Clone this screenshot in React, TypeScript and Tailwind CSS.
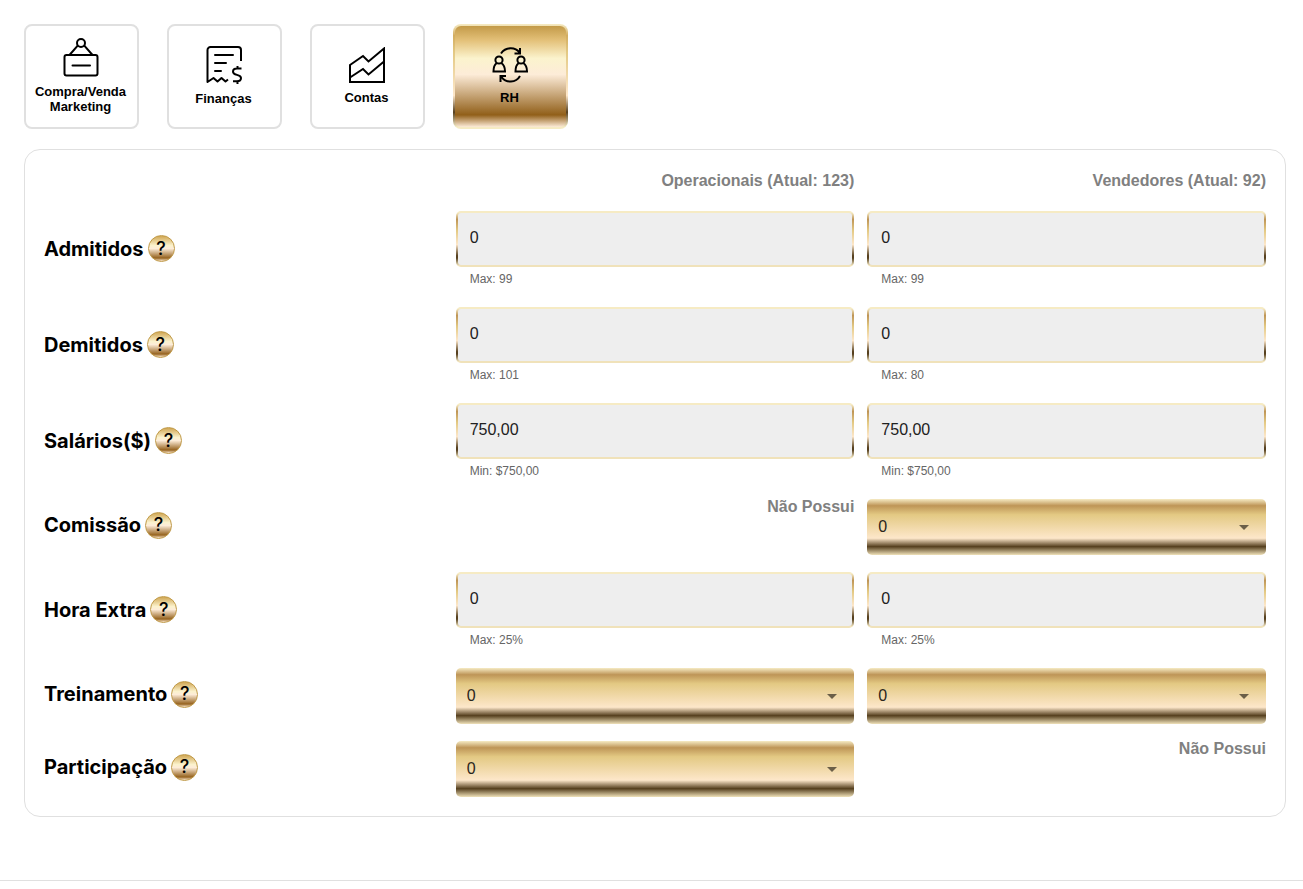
import { useState, type ReactNode } from "react";
import clsx from "clsx";

type Field =
  | { kind: "input"; value: string; hint: string }
  | { kind: "select" }
  | { kind: "none" };

const ROWS: { label: string; fields: [Field, Field] }[] = [
  {
    label: "Admitidos",
    fields: [
      { kind: "input", value: "0", hint: "Max: 99" },
      { kind: "input", value: "0", hint: "Max: 99" },
    ],
  },
  {
    label: "Demitidos",
    fields: [
      { kind: "input", value: "0", hint: "Max: 101" },
      { kind: "input", value: "0", hint: "Max: 80" },
    ],
  },
  {
    label: "Salários($)",
    fields: [
      { kind: "input", value: "750,00", hint: "Min: $750,00" },
      { kind: "input", value: "750,00", hint: "Min: $750,00" },
    ],
  },
  { label: "Comissão", fields: [{ kind: "none" }, { kind: "select" }] },
  {
    label: "Hora Extra",
    fields: [
      { kind: "input", value: "0", hint: "Max: 25%" },
      { kind: "input", value: "0", hint: "Max: 25%" },
    ],
  },
  { label: "Treinamento", fields: [{ kind: "select" }, { kind: "select" }] },
  { label: "Participação", fields: [{ kind: "select" }, { kind: "none" }] },
];

const COLUMNS = ["Operacionais", "Vendedores"];
const TOTALS = [123, 92];

function Icon({ height, children }: { height: number; children: ReactNode }) {
  return (
    <svg
      width="36"
      height={height}
      viewBox={`0 0 36 ${height}`}
      fill="none"
      stroke="currentColor"
      strokeWidth="2"
      aria-hidden="true"
    >
      {children}
    </svg>
  );
}

const TABS = [
  {
    id: "marketing",
    label: "Compra/Venda Marketing",
    icon: (
      <Icon height={39}>
        <circle cx="18" cy="5" r="4" />
        <path d="M6.5 17 14.7 7.6M29.5 17 21.3 7.6" />
        <rect x="1.5" y="17" width="33" height="20.5" rx="2" />
        <path d="M9.5 27.5h17.5" strokeLinecap="round" />
      </Icon>
    ),
  },
  {
    id: "financas",
    label: "Finanças",
    icon: (
      <Icon height={38}>
        <path
          d="M35 15V4a3 3 0 0 0-3-3H4.500a3 3 0 0 0-3 3v32l6-4 4 3.500 4-3.500 4 3.500 2.500-2"
          strokeLinejoin="round"
        />
        <path d="M9 9h18M9 17h11M9 25h6" strokeLinecap="round" />
        <path d="M35.500 22.500h-4.500c-2.500 0-4 1.300-4 3.200 0 4.300 8 2 8 6.300 0 2-1.500 3.200-4 3.200h-4M31.500 20v2.500M31.500 35V38" />
      </Icon>
    ),
  },
  {
    id: "contas",
    label: "Contas",
    icon: (
      <Icon height={36}>
        <path d="M1 18 14 9l5.5 5.5L35 1.500V35H1ZM1 30.500 14 22l5.500 5.500L35 14.500" />
      </Icon>
    ),
  },
  {
    id: "rh",
    label: "RH",
    icon: (
      <Icon height={36}>
        <circle cx="7" cy="13" r="3.600" />
        <path d="M4.800 16C2.500 17.500 1.500 20 1.500 24.500h11.500c0-4.500-1.300-7-3.800-8.500" />
        <circle cx="29" cy="13" r="3.600" />
        <path d="M26.800 16c-2.300 1.500-3.300 4-3.300 8.500H35c0-4.500-1.300-7-3.800-8.500" />
        <path d="M9 6.500c4.500-6.500 14-7 18.500-1M28 1v5.500h-5.500" />
        <path d="M28 29c-4 7-14 7.500-18.500 1M8.500 35v-6H14" />
      </Icon>
    ),
  },
];

function HelpButton({ topic }: { topic: string }) {
  return (
    <button
      type="button"
      aria-label={`Ajuda: ${topic}`}
      className="flex size-[27px] shrink-0 items-center justify-center rounded-full border border-[#c09a48] bg-[linear-gradient(#d0a652_0%,#fbf2cd_38%,#fdecd8_50%,#96631f_88%,#fbe6cd_100%)] font-['Inter'] text-lg leading-none font-medium"
    >
      ?
    </button>
  );
}

function NumberField({ id, name, initial, hint }: { id: string; name: string; initial: string; hint: string }) {
  const [value, setValue] = useState(initial);

  return (
    <div className="min-w-0">
      <input
        id={id}
        aria-label={name}
        aria-describedby={`${id}-hint`}
        value={value}
        onChange={(e) => setValue(e.target.value)}
        className="block h-14 w-full rounded-[5px] border-2 border-transparent px-3 pb-0.5 text-base text-[#212121] [background:linear-gradient(#eeeeee,#eeeeee)_padding-box,linear-gradient(#f6ebc4_0%,#f6ebc4_3%,#be9557_15%,#e3c983_35%,#fde7ca_60%,#56401f_80%,#56401f_84%,#f0e2ba_97%)_border-box]"
      />
      <p id={`${id}-hint`} className="mt-0.5 mb-px px-3.5 text-xs leading-5 text-[#666666]">
        {hint}
      </p>
    </div>
  );
}

function SelectField({ id, name }: { id: string; name: string }) {
  const [value, setValue] = useState("0");

  return (
    <div className="relative h-14 min-w-0">
      <select
        id={id}
        aria-label={name}
        value={value}
        onChange={(e) => setValue(e.target.value)}
        className="size-full appearance-none rounded-[5px] bg-[linear-gradient(#f6ebc4_0%,#be9557_12%,#e3c983_28%,#fde7ca_70%,#56401f_85%,#f0e2ba_100%)] pr-8 pl-[11px] text-base text-[#2a261c]"
      >
        <option value="0">0</option>
        <option value="1">1</option>
        <option value="2">2</option>
      </select>
      <svg
        viewBox="0 0 24 24"
        className="pointer-events-none absolute top-4 right-2.5 size-6 fill-[#6b5f48]"
        aria-hidden="true"
      >
        <path d="m7 10 5 5 5-5z" />
      </svg>
    </div>
  );
}

export default function App() {
  const [active, setActive] = useState("rh");

  return (
    <div className="bg-white pt-6 font-['Liberation_Sans',Arial,sans-serif] text-black">
      <main className="pr-[17px] pl-6">
        <nav className="mb-5 flex flex-wrap gap-7">
          {TABS.map((tab) => (
            <button
              key={tab.id}
              type="button"
              aria-pressed={active === tab.id}
              onClick={() => setActive(tab.id)}
              className={clsx(
                "flex h-[105px] w-[115px] flex-col items-center justify-center gap-[7px] rounded-lg border-2 pr-0.5 pb-0.5 text-[13px] leading-[15px] font-bold",
                active === tab.id
                  ? "border-transparent [background:linear-gradient(#c39a48_0%,#e3c078_14%,#fbf3cd_32%,#fdecd8_48%,#915f19_88%,#fdebd8_100%)_padding-box,linear-gradient(#f6ebc4_0%,#d3ad60_11%,#e3c983_27%,#fde7ca_68%,#56401f_84%,#f6ebc4_98%)_border-box]"
                  : "border-[#e0e0e0] bg-white",
              )}
            >
              {tab.icon}
              <span>{tab.label}</span>
            </button>
          ))}
        </nav>

        <section className="grid grid-cols-3 gap-x-[13px] gap-y-[17px] rounded-2xl border border-[#e0e0e0] px-[19px] pt-5 pb-[19px]">
          {COLUMNS.map((column, i) => (
            <h2
              key={column}
              className={clsx(
                "h-6 text-right text-base leading-[22px] font-bold text-[#808080]",
                i === 0 && "col-start-2",
              )}
            >
              {column} (Atual: {TOTALS[i]})
            </h2>
          ))}

          {ROWS.map((row, r) => (
            <div key={row.label} className="col-span-3 grid grid-cols-subgrid">
              <div className="flex items-center gap-1 pb-1">
                <h3 className="font-['Inter',sans-serif] text-xl leading-6 font-bold">{row.label}</h3>
                <HelpButton topic={row.label} />
              </div>
              {row.fields.map((field, c) => {
                const id = `campo-${r}-${c}`;
                const name = `${row.label} ${COLUMNS[c]}`;
                if (field.kind === "input") {
                  return <NumberField key={id} id={id} name={name} initial={field.value} hint={field.hint} />;
                }
                if (field.kind === "select") {
                  return <SelectField key={id} id={id} name={name} />;
                }
                return (
                  <p key={id} className="text-right text-base leading-4 font-bold text-[#808080]">
                    Não Possui
                  </p>
                );
              })}
            </div>
          ))}
        </section>
      </main>

      <footer className="mt-[63px] border-t border-[#e0e0e0]" />
    </div>
  );
}
